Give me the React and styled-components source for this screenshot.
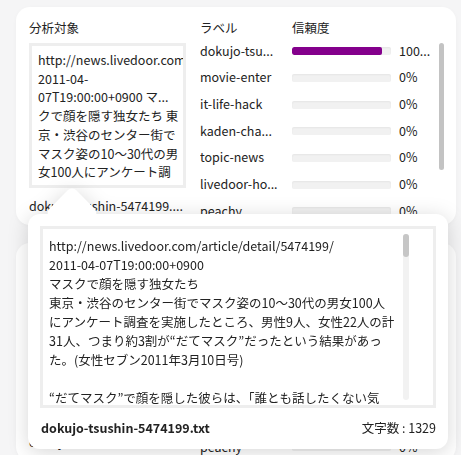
import React from "react";
import styled, { createGlobalStyle } from "styled-components";

const GlobalStyle = createGlobalStyle`
  html, body {
    margin: 0;
    padding: 0;
    overflow: hidden;
    background: #f5f5f6;
  }
  body {
    font-family: "Noto Sans CJK JP", "Noto Sans", sans-serif;
    font-size: 12.5px;
    color: #222;
  }
`;

const labels = [
  { name: "dokujo-tsu...", pct: "100...", value: 91 },
  { name: "movie-enter", pct: "0%", value: 0 },
  { name: "it-life-hack", pct: "0%", value: 0 },
  { name: "kaden-cha...", pct: "0%", value: 0 },
  { name: "topic-news", pct: "0%", value: 0 },
  { name: "livedoor-ho...", pct: "0%", value: 0 },
  { name: "peachy", pct: "0%", value: 0 },
  { name: "smax", pct: "0%", value: 0 },
  { name: "sports-watch", pct: "0%", value: 0 },
];

const previewLines = [
  "http://news.livedoor.com/article/detail/5474199/",
  "2011-04-07T19:00:00+0900",
  "マスクで顔を隠す独女たち",
  "東京・渋谷のセンター街でマスク姿の10〜30代の男女100人",
  "にアンケート調査を実施したところ、男性9人、女性22人の計",
  "31人、つまり約3割が“だてマスク”だったという結果があっ",
  "た。(女性セブン2011年3月10日号)",
  "",
  "“だてマスク”で顔を隠した彼らは、「誰とも話したくない気",
  "分なので」などと答えたという。",
];

const snippetLines = [
  "http://news.livedoor.com/article",
  "2011-04-",
  "07T19:00:00+0900 マ...",
  "クで顔を隠す独女たち 東",
  "京・渋谷のセンター街で",
  "マスク姿の10〜30代の男",
  "女100人にアンケート調",
  "査を実施したところ",
];

const ResultCard = ({ showPopover }) => (
  <Card>
    <LeftCol>
      <Heading>分析対象</Heading>
      <Snippet>
        {snippetLines.map((l, i) => (
          <div key={i}>{l}</div>
        ))}
      </Snippet>
      <FileName>dokujo-tsushin-5474199....</FileName>
    </LeftCol>
    <RightCol>
      <Table>
        <Row $head>
          <span>ラベル</span>
          <span>信頼度</span>
        </Row>
        {labels.map((l) => (
          <Row key={l.name}>
            <Label>{l.name}</Label>
            <Bar>
              <Fill style={{ width: `${l.value}%` }} />
            </Bar>
            <span>{l.pct}</span>
          </Row>
        ))}
      </Table>
      <ScrollTrack>
        <Thumb />
      </ScrollTrack>
    </RightCol>
    {showPopover && (
      <Popover>
        <Arrow />
        <PreviewBox>
          <PreviewText>
            {previewLines.map((l, i) => (
              <div key={i}>{l || "\u00a0"}</div>
            ))}
          </PreviewText>
          <InnerTrack>
            <InnerThumb />
          </InnerTrack>
        </PreviewBox>
        <Footer>
          <strong>dokujo-tsushin-5474199.txt</strong>
          <span>文字数 : 1329</span>
        </Footer>
      </Popover>
    )}
  </Card>
);

const App = () => (
  <>
    <GlobalStyle />
    <Page>
      <ResultCard showPopover />
      <ResultCard />
    </Page>
  </>
);

const Page = styled.main`
  box-sizing: border-box;
  height: 455px;
  overflow: hidden;
  padding: 7px 5px 0 16px;
`;

const Card = styled.section`
  position: relative;
  box-sizing: border-box;
  width: 440px;
  height: 218px;
  padding: 11px 12px 0 13px;
  background: #fff;
  border-radius: 14px;
  box-shadow: 0 1px 4px rgba(0, 0, 0, 0.03);
  display: grid;
  grid-template-columns: 157px 1fr;
  column-gap: 14px;
  & + & {
    margin-top: 18px;
  }
`;

const LeftCol = styled.div`
  display: flex;
  flex-direction: column;
  min-width: 0;
`;

const Heading = styled.div`
  line-height: 19px;
`;

const Snippet = styled.div`
  box-sizing: border-box;
  height: 145px;
  margin-top: 6px;
  padding: 5px 6px 0;
  border: 3px solid #eeeeee;
  line-height: 18.7px;
  white-space: nowrap;
  overflow: hidden;
`;

const FileName = styled.div`
  margin-top: 8px;
  line-height: 19px;
  white-space: nowrap;
`;

const RightCol = styled.div`
  display: flex;
  min-width: 0;
  overflow: hidden;
`;

const Table = styled.div`
  flex: 1;
  min-width: 0;
`;

const Row = styled.div`
  display: grid;
  grid-template-columns: ${(p) => (p.$head ? "92px 1fr" : "84px 99px 1fr")};
  column-gap: ${(p) => (p.$head ? "0" : "8px")};
  align-items: center;
  height: ${(p) => (p.$head ? "19px" : "26.67px")};
  white-space: nowrap;
`;

const Label = styled.span`
  overflow: hidden;
`;

const Bar = styled.div`
  height: 8px;
  margin-top: 2px;
  background: #f1f1f1;
  border-radius: 2px;
  box-shadow: inset 0 1px 2px rgba(0, 0, 0, 0.05);
  overflow: hidden;
`;

const Fill = styled.div`
  height: 100%;
  background: #84008c;
  border-radius: 2px;
`;

const ScrollTrack = styled.div`
  width: 5px;
  margin-left: 3px;
  padding-top: 25px;
`;

const Thumb = styled.div`
  height: 127px;
  background: #c3c3c3;
  border-radius: 3px;
`;

const Popover = styled.div`
  position: absolute;
  left: 12px;
  top: 207px;
  z-index: 10;
  box-sizing: border-box;
  width: 420px;
  height: 235px;
  padding: 12px 12px 0;
  background: #fff;
  border-radius: 12px;
  filter: drop-shadow(0 3px 10px rgba(0, 0, 0, 0.16));
`;

const Arrow = styled.span`
  position: absolute;
  left: 25px;
  top: -20px;
  width: 38px;
  height: 38px;
  background: #fff;
  border-radius: 6px;
  transform: rotate(45deg);
`;

const PreviewBox = styled.div`
  position: relative;
  box-sizing: border-box;
  height: 182px;
  border: 3px solid #eeeeee;
  background: #fff;
  display: flex;
`;

const PreviewText = styled.div`
  flex: 1;
  min-width: 0;
  padding: 7px 6px 0;
  line-height: 19px;
  white-space: nowrap;
  overflow: hidden;
`;

const InnerTrack = styled.div`
  width: 6px;
  margin: 5px 24px 5px 0;
  background: #f2f2f2;
  border-radius: 3px;
`;

const InnerThumb = styled.div`
  height: 23px;
  background: #c6c6c6;
  border-radius: 3px;
`;

const Footer = styled.div`
  display: flex;
  justify-content: space-between;
  margin-top: 10px;
  padding-left: 1px;
  line-height: 19px;
  strong {
    font-weight: 700;
  }
`;

export default App;
